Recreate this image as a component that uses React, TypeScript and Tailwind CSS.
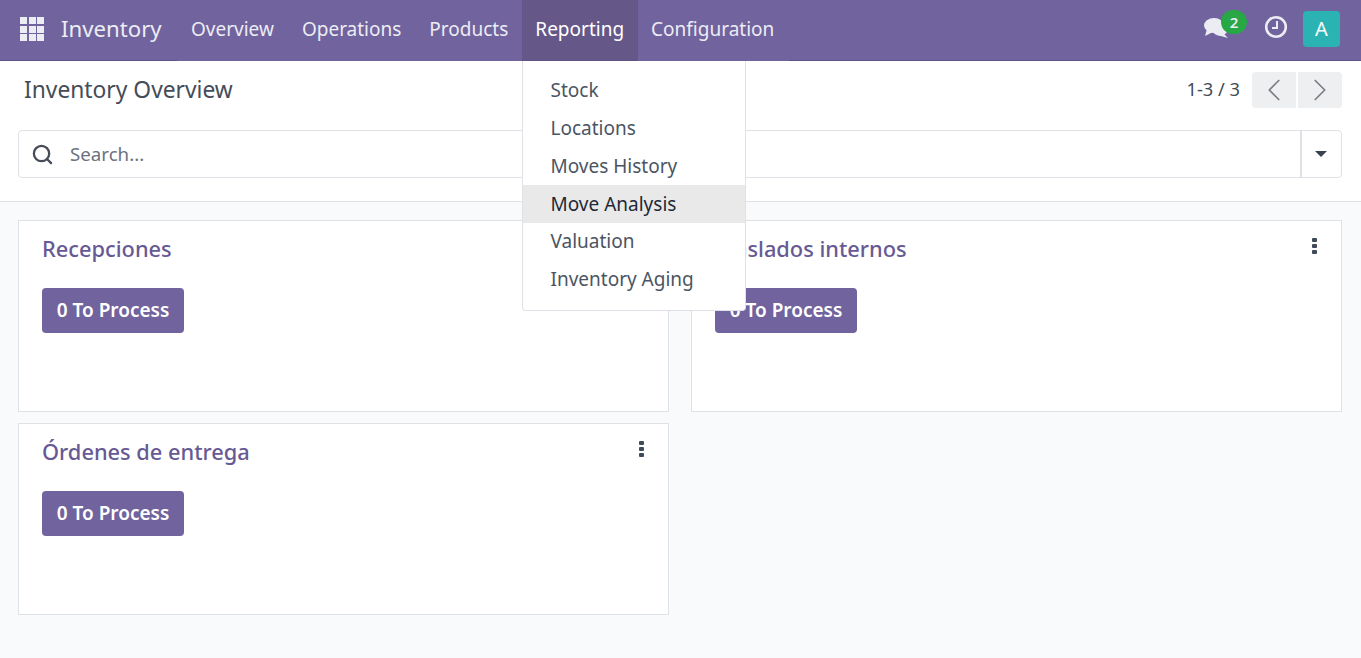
import { ChevronLeft, ChevronRight, Search } from 'lucide-react';

const navItems = [
  { label: 'Overview', className: 'flex items-center px-[14px] pb-[2px]' },
  { label: 'Operations', className: 'flex items-center px-[14px] pb-[2px]' },
  { label: 'Products', className: 'flex items-center px-[14px] pb-[2px]' },
  {
    label: 'Reporting',
    className: 'flex items-center border-b border-[#5f5285] bg-[#655889] pb-[2px] pl-[13px] pr-[14px] text-white',
  },
  { label: 'Configuration', className: 'flex items-center pb-[2px] pl-[13px] pr-[15px]' },
];
const reportItems = ['Stock', 'Locations', 'Moves History', 'Move Analysis', 'Valuation', 'Inventory Aging'];

function Kebab() {
  return (
    <div className="flex flex-col gap-[2px]">
      <span className="h-[4px] w-[5px] rounded-[1px] bg-[#3f4a5a]" />
      <span className="h-[4px] w-[5px] rounded-[1px] bg-[#3f4a5a]" />
      <span className="h-[4px] w-[5px] rounded-[1px] bg-[#3f4a5a]" />
    </div>
  );
}

function PickingCard({ title }: { title: string }) {
  return (
    <div className="relative h-[192px] border border-[#dee2e6] bg-white pl-[23px] pt-[13px]">
      <h3 className="text-[21.8px] font-medium leading-[30px] text-[#675a94]">{title}</h3>
      <button className="mt-[24px] block h-[45px] w-[142px] rounded-[4px] bg-[#71639e] text-center text-[19px] font-semibold text-white">
        0 To Process
      </button>
      <div className="absolute right-[24px] top-[17px]">
        <Kebab />
      </div>
    </div>
  );
}

export default function App() {
  return (
    <div className="relative flex h-[658px] flex-col overflow-hidden bg-[#f9fafb] font-['Noto_Sans',sans-serif] text-[#374151]">
      <header className="flex h-[61px] items-stretch bg-[#71639e] text-white">
        <div className="flex w-[177px] items-center border-b border-[#5f5285] pb-[2px]">
          <div className="ml-[20px] grid grid-cols-3 gap-[1.5px]">
            {Array.from({ length: 9 }).map((_, i) => (
              <span key={i} className="h-[7px] w-[7px] bg-[#ececf3]" />
            ))}
          </div>
          <span className="ml-[17px] text-[22.2px] text-[#ececf3]">Inventory</span>
        </div>
        <nav className="flex items-stretch text-[19px] text-[#ececf3]">
          {navItems.map((item) => (
            <div key={item.label} className={item.className}>
              {item.label}
            </div>
          ))}
        </nav>
        <div className="flex flex-1 items-center justify-end border-b border-[#5f5285] pr-[21px]">
          <div className="relative mb-[4px] mr-[34px] h-[22px] w-[26px]">
            <svg viewBox="0 0 26 22" className="h-[22px] w-[26px]" fill="#ececf3">
              <ellipse cx="10" cy="8.5" rx="10" ry="7.5" />
              <path d="M3 12 L1 19 L9 15 Z" />
              <ellipse cx="16" cy="14" rx="7" ry="4.5" />
              <path d="M19 16 L24 21 L13 18 Z" />
            </svg>
            <span className="absolute left-[17px] top-[-7px] flex h-[24px] w-[26px] items-center justify-center rounded-full bg-[#28a745] text-[15px] font-semibold text-[#ececf3]">
              2
            </span>
          </div>
          <svg viewBox="0 0 24 24" className="mb-[6px] mr-[15px] h-[24px] w-[24px]" fill="none" stroke="#ececf3">
            <circle cx="12" cy="12" r="9.8" strokeWidth="2.6" />
            <path d="M13 6 V13 H8" strokeWidth="2" />
          </svg>
          <div className="mb-[2px] flex h-[36px] w-[37px] items-center justify-center rounded-[4px] bg-[#2bb3b3] text-[20px] text-white">
            A
          </div>
        </div>
      </header>

      <section className="h-[141px] border-b border-[#dee2e6] bg-white pl-[18px] pr-[19px]">
        <div className="flex h-[69px] items-start justify-between">
          <h1 className="mt-[12px] pl-[6px] text-[22.8px] leading-[34px] text-[#454c58]">Inventory Overview</h1>
          <div className="mt-[11px] flex items-center">
            <span className="mb-[2px] mr-[12px] text-[18.3px] text-[#454c58]">1-3 / 3</span>
            <button className="flex h-[36px] w-[44px] items-center justify-center rounded-l-[4px] bg-[#eeeff1]">
              <ChevronLeft size={38} strokeWidth={1.1} className="text-[#7b7f86]" />
            </button>
            <button className="ml-[2px] flex h-[36px] w-[44px] items-center justify-center rounded-r-[4px] bg-[#eeeff1]">
              <ChevronRight size={38} strokeWidth={1.1} className="text-[#7b7f86]" />
            </button>
          </div>
        </div>
        <div className="flex h-[48px] items-stretch rounded-[4px] border border-[#dee2e6]">
          <div className="flex flex-1 items-center pl-[12px]">
            <Search size={23} strokeWidth={2.4} className="text-[#454c58]" />
            <span className="ml-[16px] text-[18.7px] text-[#6b7280]">Search...</span>
          </div>
          <div className="flex w-[41px] items-center justify-center border-l-2 border-[#dee2e6] pr-[1px]">
            <span className="h-0 w-0 border-x-[6px] border-t-[6px] border-x-transparent border-t-[#374151]" />
          </div>
        </div>
      </section>

      <main className="grid grid-cols-2 gap-x-[22px] gap-y-[11px] pl-[18px] pr-[19px] pt-[18px]">
        <PickingCard title="Recepciones" />
        <PickingCard title="Traslados internos" />
        <PickingCard title="Órdenes de entrega" />
      </main>

      <div className="absolute left-[522px] top-[61px] h-[250px] w-[224px] rounded-b-[4px] border border-t-0 border-[#dee2e6] bg-white pt-[10.6px] text-[19px]">
        {reportItems.map((item) => (
          <div
            key={item}
            className={
              item === 'Move Analysis'
                ? 'flex h-[37.8px] items-center bg-[#e9e9e9] pl-[27.5px] text-[#1f2937]'
                : 'flex h-[37.8px] items-center pl-[27.5px] text-[#4b5563]'
            }
          >
            {item}
          </div>
        ))}
      </div>
    </div>
  );
}
